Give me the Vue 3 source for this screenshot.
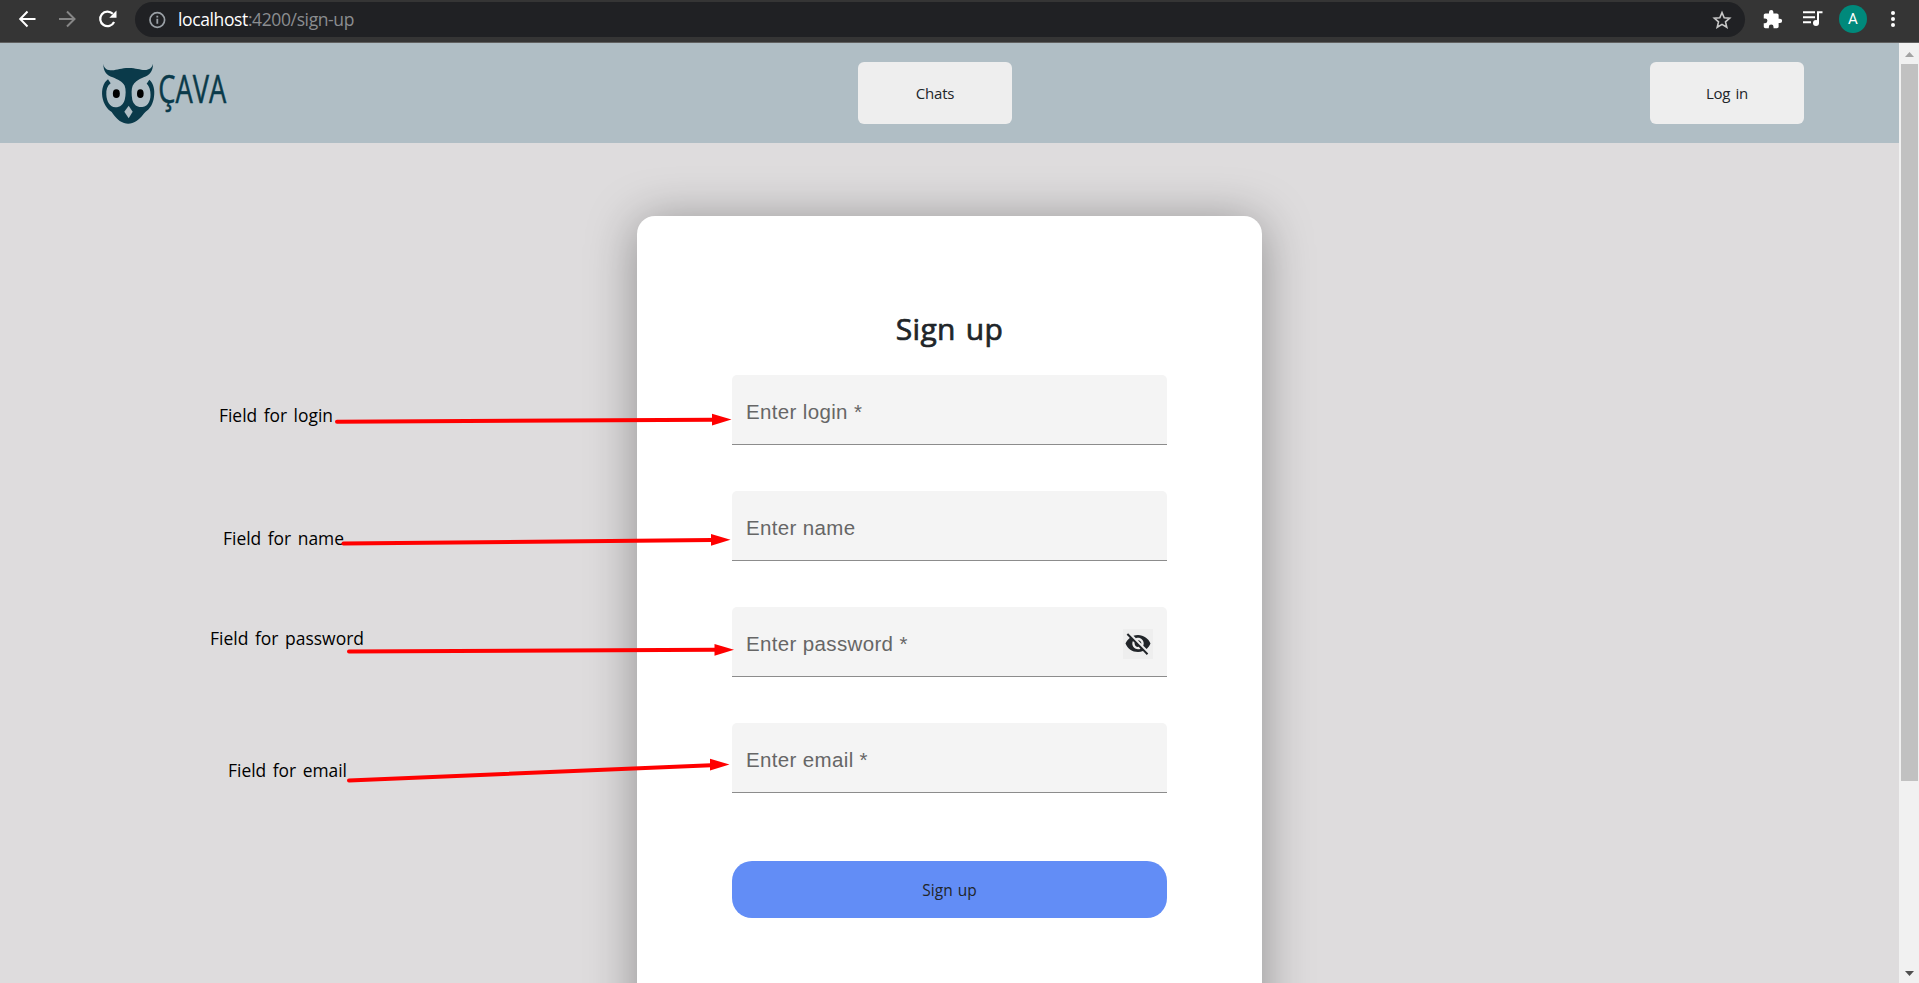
<script setup>
const fields = [
  { label: 'Enter login', required: true },
  { label: 'Enter name' },
  { label: 'Enter password', required: true, secret: true },
  { label: 'Enter email', required: true },
]

const notes = [
  { text: 'Field for login', x: 219, y: 421.5, w: 114, from: [337, 421.7], to: [713, 419.7], tip: [731.5, 419.6] },
  { text: 'Field for name', x: 223, y: 544.5, w: 121, from: [343.5, 543.5], to: [712, 540], tip: [730.5, 539.7] },
  { text: 'Field for password', x: 210, y: 644.5, w: 154, from: [349, 651.4], to: [715, 649.7], tip: [734, 649.7] },
  { text: 'Field for email', x: 228, y: 776.5, w: 119, from: [349, 780.5], to: [711, 765.2], tip: [729.5, 764.5] },
]
const head = (n) => {
  const bx = n.tip[0] - 19.5
  return `${bx},${n.tip[1] - 5.8} ${n.tip[0]},${n.tip[1]} ${bx},${n.tip[1] + 6}`
}
</script>

<template>
  <div class="window">
    <header class="chrome">
      <div class="controls">
        <svg width="20" height="20" viewBox="0 0 20 20" fill="none" stroke="#fff" stroke-width="2"><path d="M18.500 10H3.500M10.500 2.500L3.200 10l7.300 7.500" /></svg>
        <svg width="20" height="20" viewBox="0 0 20 20" fill="none" stroke="#868686" stroke-width="2"><path d="M2 10H17.500M10 2.500L17.500 10l-7.500 7.500" /></svg>
        <svg width="20" height="20" viewBox="0 0 20 20"><path d="M17.100 13a7.300 7.300 0 1 1-1.300-8.200" fill="none" stroke="#fff" stroke-width="2.200" /><path d="M19.500 1.500v7.200h-7.200z" fill="#fff" /></svg>
      </div>
      <div class="address">
        <svg class="info" width="18" height="18" viewBox="0 0 18 18"><circle cx="9.300" cy="9" r="7.300" fill="none" stroke="#9aa0a6" stroke-width="1.700" /><path d="M8.400 7.800h1.800v5H8.400zM8.400 4.800h1.800v1.800H8.400z" fill="#9aa0a6" /></svg>
        <span class="url"><b>localhost</b>:4200/sign-up</span>
        <svg class="star" width="20" height="20" viewBox="0 0 20 20"><path d="M10 2.600l2.200 5.100 5.500.5-4.200 3.700 1.300 5.400-4.800-2.900-4.800 2.900 1.300-5.400L2.300 8.200l5.500-.5z" fill="none" stroke="#c8c8c8" stroke-width="1.600" /></svg>
      </div>
      <div class="tools">
        <svg width="21" height="21" viewBox="0 0 24 24" fill="#fff"><path d="M20.500 11H19V7c0-1.100-.9-2-2-2h-4V3.500a2.500 2.500 0 0 0-5 0V5H4c-1.100 0-2 .9-2 2v3.800h1.500a2.700 2.700 0 0 1 0 5.400H2V20c0 1.100.9 2 2 2h3.800v-1.500a2.700 2.700 0 0 1 5.400 0V22H17c1.100 0 2-.9 2-2v-4h1.500a2.500 2.500 0 0 0 0-5z" /></svg>
        <svg width="20" height="18" viewBox="0 0 20 18"><path d="M0 2.200h12M0 7.200h12M0 12.200h8" stroke="#fff" stroke-width="2" /><circle cx="13" cy="13" r="3" fill="#fff" /><path d="M15 13V2.200h4.500" fill="none" stroke="#fff" stroke-width="2" /></svg>
        <span class="avatar">A</span>
        <svg width="6" height="18" viewBox="0 0 6 18" fill="#fff"><circle cx="3" cy="3" r="2" /><circle cx="3" cy="9" r="2" /><circle cx="3" cy="15" r="2" /></svg>
      </div>
    </header>

    <div class="viewport">
      <main class="page">
        <nav class="nav">
          <svg class="logo" viewBox="15 4 375 255" width="125" height="85">
            <g fill="#0a3a4a">
              <path d="M40 42C42 57 52 62 66 62C82 61 94 55 116 55C138 55 150 61 164 61C178 60 186 55 189 42C189 66 178 77 161 83C144 89 133 98 128 108C124 117 124 133 127 151C131 165 142 174 157 172C176 169 184 150 181 126C179 113 175 106 170 102L178 90C191 101 195 121 192 141C189 163 180 177 167 186C157 196 148 213 127 220C119 223 110 223 102 220C83 214 73 198 65 187C51 178 41 163 37 142C34 119 40 99 54 89L62 101C52 108 48 120 49 135C50 156 60 171 76 173C91 173 100 164 104 151C108 135 108 118 104 108C98 97 83 89 68 83C50 77 40 66 40 42Z" />
            </g>
            <path d="M116 168L128 186L116 206L103 186Z" fill="#b0bec5" />
            <ellipse cx="79" cy="132" rx="10.500" ry="13" />
            <ellipse cx="151" cy="132" rx="10" ry="13" />
            <text x="205" y="159" textLength="204" lengthAdjust="spacingAndGlyphs">ÇAVA</text>
          </svg>
          <button class="nav-btn">Chats</button>
          <button class="nav-btn">Log in</button>
        </nav>

        <form class="card" @submit.prevent>
          <h1>Sign up</h1>
          <div v-for="f in fields" :key="f.label" class="field">
            <label>{{ f.label }}<span v-if="f.required" class="mark"> *</span></label>
            <span v-if="f.secret" class="eye">
              <svg width="30" height="30" viewBox="-1.200 -0.800 26.400 26.400"><path fill="#212529" d="M12 7c2.760 0 5 2.240 5 5 0 .65-.13 1.260-.36 1.830l2.920 2.920c1.510-1.260 2.700-2.890 3.430-4.750-1.730-4.390-6-7.500-11-7.500-1.400 0-2.740.25-3.980.7l2.160 2.160C10.740 7.130 11.350 7 12 7zM2 4.270l2.280 2.280.46.46C3.080 8.300 1.780 10.020 1 12c1.730 4.390 6 7.500 11 7.500 1.550 0 3.030-.3 4.380-.84l.42.42L19.730 22 21 20.730 3.270 3 2 4.270zM7.530 9.800l1.550 1.550c-.05.21-.08.43-.08.65 0 1.660 1.340 3 3 3 .22 0 .44-.03.65-.08l1.550 1.550c-.67.33-1.410.53-2.200.53-2.760 0-5-2.240-5-5 0-.79.2-1.530.53-2.200zm4.310-.78l3.150 3.150.02-.16c0-1.660-1.340-3-3-3l-.17.01z" /></svg>
            </span>
          </div>
          <button class="submit">Sign up</button>
        </form>
      </main>

      <aside class="scrollbar">
        <svg width="20" height="21" viewBox="0 0 20 21"><path d="M6 14l4.500-5 4.500 5z" fill="#a3a3a3" /></svg>
        <div class="thumb"></div>
        <svg class="down" width="20" height="21" viewBox="0 0 20 21"><path d="M6 9h9l-4.500 5z" fill="#505050" /></svg>
      </aside>
    </div>

    <svg class="notes" width="1919" height="983" viewBox="0 0 1919 983">
      <g v-for="n in notes" :key="n.text">
        <text :x="n.x" :y="n.y" :textLength="n.w" lengthAdjust="spacingAndGlyphs">{{ n.text }}</text>
        <line :x1="n.from[0]" :y1="n.from[1]" :x2="n.to[0]" :y2="n.to[1]" />
        <polygon :points="head(n)" />
      </g>
    </svg>
  </div>
</template>

<style>
html, body { margin: 0; overflow: hidden; }
</style>

<style scoped>
.window {
  position: relative;
  display: flex;
  flex-direction: column;
  width: 1919px;
  height: 983px;
  overflow: hidden;
  font-family: "Open Sans", "Noto Sans", sans-serif;
  color: #212529;
}
.window * { box-sizing: border-box; }
svg { display: block; flex: none; }
.chrome {
  display: flex;
  flex: none;
  height: 43px;
  padding-top: 2px;
  background: #353535;
  border-bottom: 1px solid #606060;
}
.controls {
  display: flex;
  gap: 20px;
  width: 135px;
  height: 34px;
  padding-left: 17px;
  align-items: center;
}
.address {
  display: flex;
  align-items: center;
  width: 1610px;
  height: 35px;
  padding: 0 13px;
  border-radius: 18px;
  background: #202124;
}
.url {
  flex: 1;
  margin: -2px 0 0 12px;
  font-size: 17.500px;
  line-height: 24px;
  letter-spacing: -.38px;
  color: #8b8d90;
}
.url b { font-weight: 400; color: #fff; }
.tools {
  display: flex;
  align-items: center;
  height: 34px;
  margin-left: 17px;
}
.tools svg:nth-child(2) { margin-left: 20px; }
.avatar {
  width: 28px;
  height: 28px;
  margin: 0 23px 0 16px;
  border-radius: 50%;
  background: #00897b;
  color: #fff;
  font: 15px/29px Roboto, sans-serif;
  text-align: center;
}
.viewport { display: flex; flex: 1; min-height: 0; }
.page {
  width: 1899px;
  background: #dedcdd;
  overflow: hidden;
}
.nav {
  display: flex;
  align-items: center;
  justify-content: space-between;
  height: 100px;
  padding: 0 95px;
  background: #b0bec5;
}
.logo { overflow: visible; }
.logo text {
  font-family: "Open Sans", "Noto Sans", sans-serif;
  font-size: 114px;
  fill: #0a3a4a;
  stroke: #0a3a4a;
  stroke-width: 1.500px;
}
button {
  padding: 0;
  border: 0;
  font-family: "Open Sans", "Noto Sans", sans-serif;
  color: #212529;
}
.nav-btn {
  width: 154px;
  height: 62px;
  border-radius: 6px;
  background: #eee;
  font-size: 15px;
  letter-spacing: -.2px;
  word-spacing: 1.500px;
}
.card {
  display: flex;
  flex-direction: column;
  width: 625px;
  height: 860px;
  margin: 73px 0 0 637px;
  padding: 93px 95px 0;
  border-radius: 18px;
  background: #fff;
  box-shadow: 0 5px 50px rgba(0, 0, 0, .36);
}
h1 {
  margin: 0 0 26px;
  font-size: 30px;
  font-weight: 500;
  line-height: 40px;
  letter-spacing: .3px;
  word-spacing: 2px;
  text-align: center;
  -webkit-text-stroke: .7px #212529;
}
.field {
  display: flex;
  align-items: center;
  justify-content: space-between;
  flex: none;
  height: 70px;
  margin-bottom: 46px;
  padding: 5px 14px 0;
  border-bottom: 1px solid #8c8c8c;
  border-radius: 5px 5px 0 0;
  background: #f4f4f4;
}
.field label {
  font: 20.500px/24px "Liberation Sans", Arial, sans-serif;
  letter-spacing: .35px;
  color: #666;
}
.mark { white-space: pre; }
.eye { background: #eee; }
.submit {
  flex: none;
  height: 57px;
  margin-top: 22px;
  border-radius: 20px;
  background: #628df6;
  font-size: 15.500px;
  word-spacing: 1px;
}
.scrollbar {
  display: flex;
  flex-direction: column;
  width: 20px;
  background: #f1f1f1;
}
.thumb { width: 17px; height: 717px; margin-left: 2px; background: #c1c1c1; }
.down { margin-top: auto; }
.notes { position: absolute; inset: 0; pointer-events: none; }
.notes text {
  font-family: "Open Sans", "Noto Sans", sans-serif;
  font-size: 17.500px;
  word-spacing: 2px;
  fill: #000;
}
.notes line { stroke: #f00; stroke-width: 4; stroke-linecap: round; }
.notes polygon { fill: #f00; }
</style>
